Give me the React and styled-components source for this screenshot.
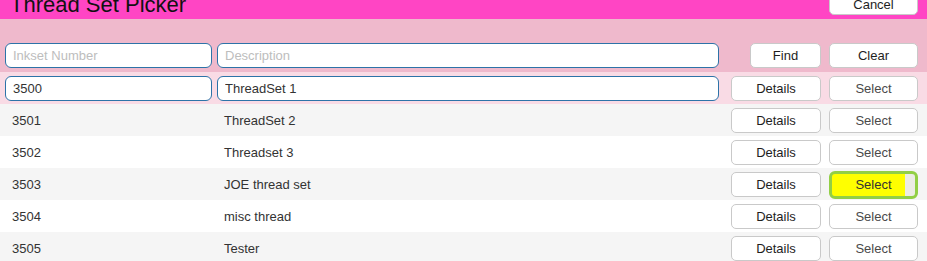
import styled, { createGlobalStyle } from "styled-components";

const GlobalStyle = createGlobalStyle`
  body {
    margin: 0;
    font-family: "Liberation Sans", Arial, sans-serif;
    font-size: 13px;
    color: #333;
    background: #fff;
  }
`;

const Page = styled.div`
  width: 927px;
  height: 261px;
  overflow: hidden;
`;

const Header = styled.div`
  height: 19px;
  background: #ff45c4;
  display: flex;
  justify-content: space-between;
  align-items: flex-start;
  padding: 0 9px 0 10px;
  overflow: hidden;
`;

const Title = styled.h1`
  margin: -6px 0 0;
  font-size: 22px;
  line-height: 22px;
  font-weight: normal;
  color: #111;
`;

const Button = styled.button`
  box-sizing: border-box;
  width: ${(p) => p.$w || 89}px;
  height: 25px;
  padding: 0;
  border: 1px solid #c9c9c9;
  border-radius: 5px;
  background: #fff;
  font-family: "Liberation Sans", Arial, sans-serif;
  font-size: 13px;
  color: ${(p) => (p.$muted ? "#4a4a4a" : "#1e1e1e")};
  cursor: pointer;
`;

const CancelButton = styled(Button)`
  margin-top: -10px;
  padding-top: 4px;
`;

const HotButton = styled(Button)`
  height: 28px;
  border: 3px solid #92cf45;
  border-radius: 6px;
  background: linear-gradient(to right, #ffff00 0 88%, #ecece4 88% 100%);
  color: #333;
  margin-top: 1px;
`;

const Row = styled.div`
  display: flex;
  align-items: center;
  height: ${(p) => p.$h || 32}px;
  padding: ${(p) => p.$pad || "0"};
  box-sizing: border-box;
  background: ${(p) => p.$bg};
`;

const Input = styled.input`
  box-sizing: border-box;
  width: ${(p) => p.$w}px;
  height: 25px;
  margin-right: 5px;
  padding: 0 7px;
  border: 1px solid #2d73a8;
  border-radius: 6px;
  background: #fff;
  font-family: "Liberation Sans", Arial, sans-serif;
  font-size: 13px;
  color: #333;
  outline: none;
  &::placeholder {
    color: #bdbdbd;
  }
`;

const Cell = styled.div`
  box-sizing: border-box;
  width: ${(p) => p.$w}px;
  margin-right: 5px;
  padding-left: 7px;
`;

const Actions = styled.div`
  margin-left: auto;
  display: flex;
  align-items: center;
  gap: 8px;
  padding-right: 9px;
`;

const rows = [
  ["3501", "ThreadSet 2"],
  ["3502", "Threadset 3"],
  ["3503", "JOE thread set", true],
  ["3504", "misc thread"],
  ["3505", "Tester"],
];

export default function App() {
  return (
    <Page>
      <GlobalStyle />
      <Header>
        <Title>Thread Set Picker</Title>
        <CancelButton>Cancel</CancelButton>
      </Header>
      <Row $h={53} $pad="24px 0 4px 5px" $bg="#efb9cc">
        <Input $w={207} placeholder="Inkset Number" />
        <Input $w={502} placeholder="Description" />
        <Actions>
          <Button $w={71}>Find</Button>
          <Button>Clear</Button>
        </Actions>
      </Row>
      <Row $pad="0 0 0 5px" $bg="#f9dbe5">
        <Input $w={207} defaultValue="3500" />
        <Input $w={502} defaultValue="ThreadSet 1" />
        <Actions>
          <Button $w={90}>Details</Button>
          <Button $muted>Select</Button>
        </Actions>
      </Row>
      {rows.map(([num, desc, hot], i) => (
        <Row key={num} $pad="0 0 0 5px" $bg={i % 2 === 0 ? "#f5f5f5" : "#fff"}>
          <Cell $w={207}>{num}</Cell>
          <Cell $w={502}>{desc}</Cell>
          <Actions>
            <Button $w={90}>Details</Button>
            {hot ? <HotButton>Select</HotButton> : <Button $muted>Select</Button>}
          </Actions>
        </Row>
      ))}
    </Page>
  );
}
